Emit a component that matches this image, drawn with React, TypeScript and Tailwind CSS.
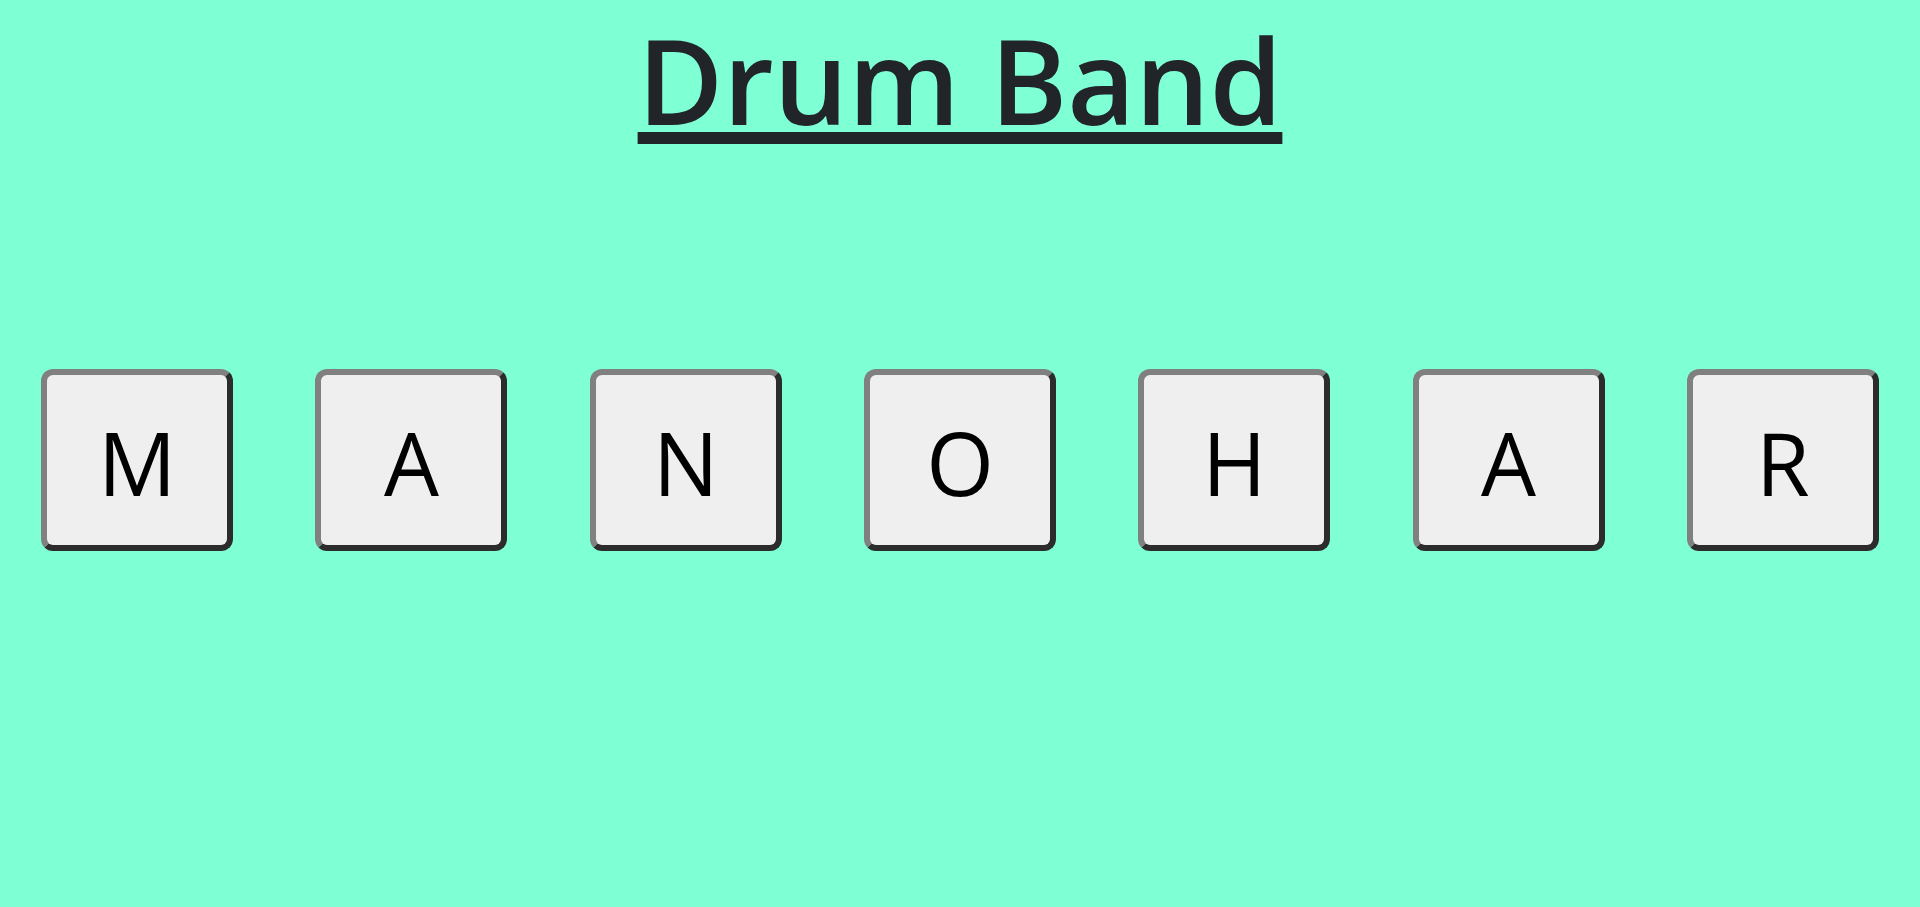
const keys = ["M", "A", "N", "O", "H", "A", "R"];

export default function App() {
  return (
    <main className="min-h-screen bg-[#7fffd4] font-['Open_Sans','Noto_Sans',sans-serif]">
      <h1 className="text-center text-[117px] leading-[160px] font-semibold text-[#212529] underline decoration-[12px] underline-offset-[7px] [text-decoration-skip-ink:none]">
        Drum Band
      </h1>
      <div className="mt-[209px] grid grid-cols-7">
        {keys.map((key, index) => (
          <button
            key={index}
            type="button"
            className="h-[182px] w-[192px] max-w-[70%] justify-self-center rounded-[12px] border-6 border-t-[#808080] border-r-[#2c2c2c] border-b-[#2c2c2c] border-l-[#808080] bg-[#efefef] pt-1 text-[87px] leading-[120px] text-black"
          >
            {key}
          </button>
        ))}
      </div>
    </main>
  );
}
